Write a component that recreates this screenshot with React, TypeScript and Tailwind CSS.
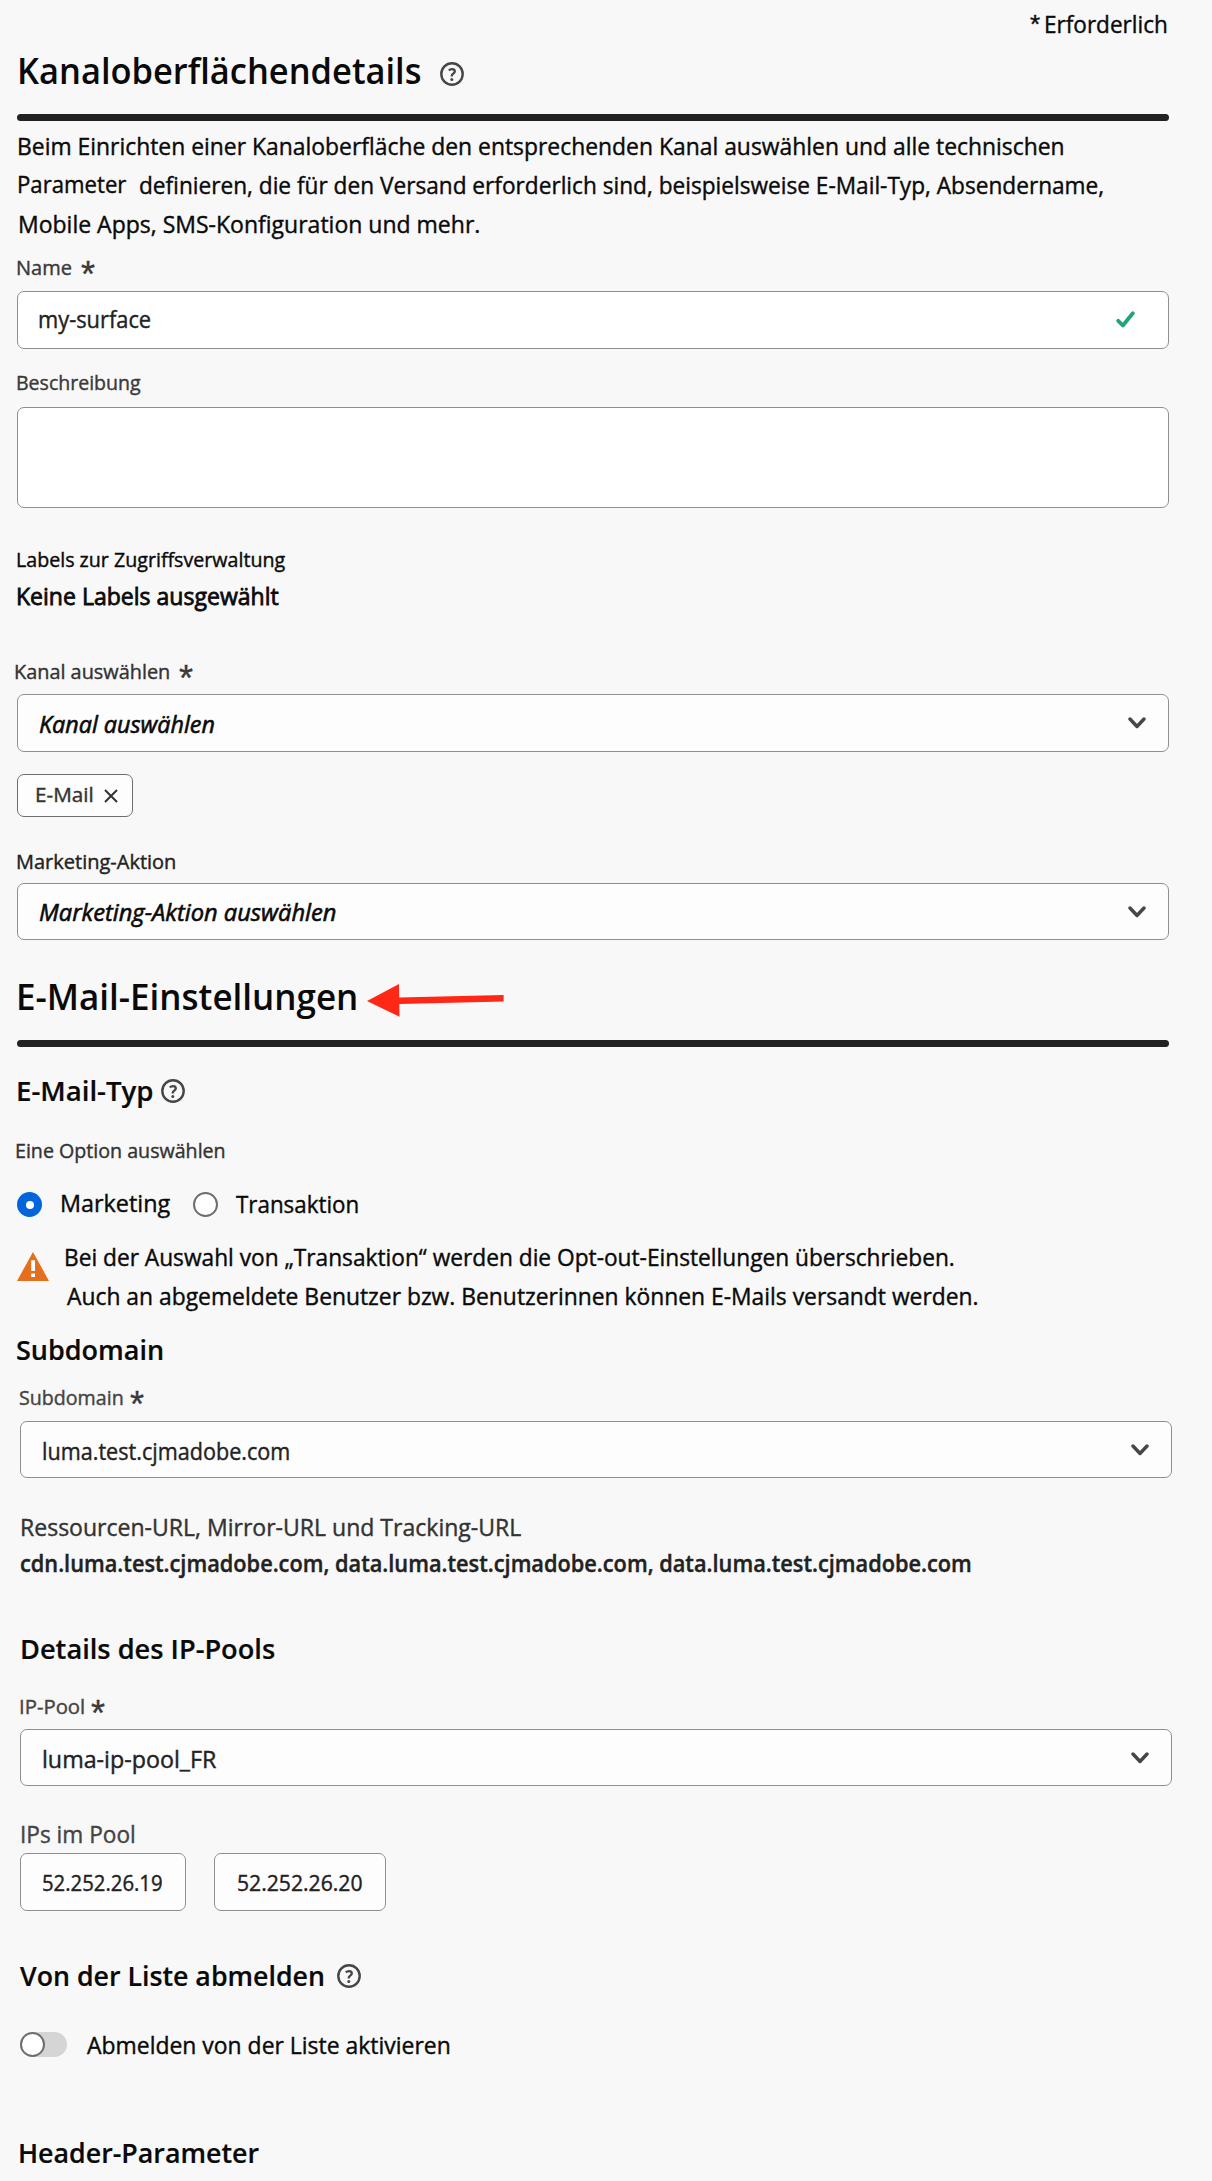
import { useLayoutEffect, useRef, useState, type ReactNode } from 'react'

/** A single line of text condensed horizontally to the given width, with a pixel of room on either side. */
function Fit({ w, className = '', children }: { w: number; className?: string; children: ReactNode }) {
  const ref = useRef<HTMLSpanElement>(null)
  const [scale, setScale] = useState(1)
  useLayoutEffect(() => {
    if (ref.current) setScale((w - 2) / ref.current.offsetWidth)
  }, [w])
  return (
    <span className={`block shrink-0 pl-px whitespace-nowrap ${className}`} style={{ width: w }}>
      <span ref={ref} className="inline-block origin-left" style={{ transform: `scaleX(${scale})` }}>
        {children}
      </span>
    </span>
  )
}

function Star({ className = '' }: { className?: string }) {
  return (
    <span className={`block h-7 shrink-0 font-['Liberation_Sans',sans-serif] text-[36px] leading-[42px] text-[#3a3a3a] ${className}`}>*</span>
  )
}

function Label({ w, className = '', required, children }: { w: number; className?: string; required?: string; children: ReactNode }) {
  return (
    <div className={`flex h-7 ${className}`}>
      <Fit w={w} className="text-[20px] leading-7">{children}</Fit>
      {required && <Star className={required} />}
    </div>
  )
}

function Help({ className = '' }: { className?: string }) {
  return (
    <svg className={`size-6 shrink-0 ${className}`} viewBox="0 0 24 24" fill="none" stroke="#464646">
      <circle cx="12" cy="12" r="10.7" strokeWidth="2.4" />
      <path d="M8.8 8.400c1-.9 2-1.300 3.100-1.300 1.700 0 2.900.9 2.900 2.300 0 2.200-3.100 2.300-3.100 4.600v.4" strokeWidth="2.300" />
      <circle cx="11.800" cy="17.500" r="1.500" fill="#464646" stroke="none" />
    </svg>
  )
}

function Chevron() {
  return (
    <svg className="h-3 w-[18px] shrink-0" viewBox="0 0 18 12" fill="none" stroke="#464646" strokeWidth="3.4" strokeLinecap="round" strokeLinejoin="round">
      <path d="M2 2 9 9.500 16 2" />
    </svg>
  )
}

function Select({ className = '', children }: { className?: string; children: ReactNode }) {
  return (
    <div className={`flex w-[1152px] items-center justify-between rounded-[7px] border border-[#8f8f8f] bg-[#fdfdfd] pr-[22px] ${className}`}>
      {children}
      <Chevron />
    </div>
  )
}

const H1 = 'text-[36px] leading-[48px] font-semibold [-webkit-text-stroke:0px]'
const H2 = 'text-[27px] leading-9 font-semibold [-webkit-text-stroke:0.2px_currentColor]'

export default function App() {
  return (
    <main className="flex h-[2181px] w-[1212px] flex-col overflow-hidden bg-[#f8f8f8] pt-2 pl-[17px] font-['Open_Sans',sans-serif] text-[24px] leading-8 text-[#0a0a0a] [-webkit-text-stroke:0.4px_currentColor]">
      <div className="flex h-8 w-[1152px] justify-end">
        <span className="mr-[3px] block h-8 font-['Liberation_Sans',sans-serif] text-[26px] leading-[33px]">*</span>
        <Fit w={126}>Erforderlich</Fit>
      </div>

      <div className="mt-[7px] flex items-center">
        <Fit w={407} className={`-ml-px ${H1}`}>Kanaloberflächendetails</Fit>
        <Help className="mt-[6px] ml-[17px]" />
      </div>
      <div className="mt-[19px] h-[7px] w-[1152px] rounded-full bg-[#222]" />

      <div className="mt-[5px] text-[24px] leading-[39px]">
        <Fit w={1050} className="-ml-px">Beim Einrichten einer Kanaloberfläche den entsprechenden Kanal auswählen und alle technischen</Fit>
        <div className="flex">
          <Fit w={111} className="-mt-px -ml-px">Parameter</Fit>
          <Fit w={967} className="ml-[11px]">definieren, die für den Versand erforderlich sind, beispielsweise E-Mail-Typ, Absendername,</Fit>
        </div>
        <Fit w={464}>Mobile Apps, SMS-Konfiguration und mehr.</Fit>
      </div>

      <Label w={58} required="ml-[8px]" className="mt-[11px] -ml-[2px] text-[#3a3a3a]">Name</Label>
      <div className="mt-[9px] flex h-[58px] w-[1152px] items-center justify-between rounded-[7px] border border-[#8f8f8f] bg-white pr-[33px] pl-[19px]">
        <Fit w={115} className="-mt-[2px] text-[23px] text-[#222]">my-surface</Fit>
        <svg className="-mt-px h-[17px] w-[19px]" viewBox="0 0 19 17" fill="none" stroke="#22a574" strokeWidth="3.800" strokeLinecap="round" strokeLinejoin="round">
          <path d="M2.200 9.800 6.900 14.500 16.800 2.200" />
        </svg>
      </div>

      <Label w={127} className="mt-5 -ml-[2px] text-[#3a3a3a]">Beschreibung</Label>
      <div className="mt-[10px] h-[101px] w-[1152px] shrink-0 rounded-[7px] border border-[#8f8f8f] bg-white" />

      <Label w={271} className="mt-[38px] -ml-[2px]">Labels zur Zugriffsverwaltung</Label>
      <Fit w={265} className="mt-[6px] -ml-[2px] [-webkit-text-stroke:0.8px_currentColor]">Keine Labels ausgewählt</Fit>

      <Label w={158} required="ml-[8px]" className="mt-[46px] -ml-1 text-[#333]">Kanal auswählen</Label>
      <Select className="mt-2 h-[58px] pl-[20px]">
        <Fit w={178} className="mt-[2px] italic [-webkit-text-stroke:0.6px_currentColor]">Kanal auswählen</Fit>
      </Select>
      <div className="mt-[22px] flex h-[43px] w-[116px] items-center rounded-[7px] border border-[#6e6e6e] bg-[#fdfdfd] pl-4">
        <Fit w={61} className="-mt-[2px] text-[20px] leading-7 text-[#333]">E-Mail</Fit>
        <svg className="ml-[9px] size-[14px]" viewBox="0 0 14 14" fill="none" stroke="#333" strokeWidth="2">
          <path d="M1 1l12 12M13 1 1 13" />
        </svg>
      </div>

      <Label w={162} className="mt-[31px] -ml-[2px] text-[#222]">Marketing-Aktion</Label>
      <Select className="mt-[7px] h-[57px] pl-[20px]">
        <Fit w={299} className="italic [-webkit-text-stroke:0.6px_currentColor]">Marketing-Aktion auswählen</Fit>
      </Select>

      <div className="mt-[33px] flex items-center">
        <Fit w={344} className={`-ml-[2px] ${H1}`}>E-Mail-Einstellungen</Fit>
        <svg className="mt-[6px] ml-2 h-[33px] w-[137px]" viewBox="0 0 137 33" fill="#ff2716">
          <path d="M0 17 32 0l.2 13.4L136.6 11v6.6L32.3 20l.2 12.8z" />
        </svg>
      </div>
      <div className="mt-[19px] h-[7px] w-[1152px] rounded-full bg-[#222]" />

      <div className="mt-[26px] flex">
        <Fit w={140} className={`-ml-[2px] ${H2}`}>E-Mail-Typ</Fit>
        <Help className="mt-[6px] ml-[6px]" />
      </div>
      <Label w={213} className="mt-7 -ml-[3px] text-[#333]">Eine Option auswählen</Label>

      <div className="mt-[22px] flex h-8">
        <span className="mt-[5px] flex size-[25px] items-center justify-center rounded-full bg-[#0265dc]">
          <span className="size-2 rounded-full bg-white" />
        </span>
        <Fit w={112} className="ml-[17px]">Marketing</Fit>
        <span className="mt-[5px] ml-[22px] size-[25px] rounded-full border-[2.500px] border-[#6e6e6e] bg-white" />
        <Fit w={125} className="mt-px ml-[17px]">Transaktion</Fit>
      </div>

      <div className="mt-[18px] flex leading-[39px]">
        <svg className="mt-[15px] h-[29px] w-8" viewBox="0 0 32 29">
          <path d="M16 0 32 29H0z" fill="#e46f1c" />
          <path d="M14.200 8.200h3.800v10.800h-3.800zM14.200 21.500h3.800v3.500h-3.800z" fill="#fff" />
        </svg>
        <div className="ml-[14px]">
          <Fit w={893}>Bei der Auswahl von „Transaktion“ werden die Opt-out-Einstellungen überschrieben.</Fit>
          <Fit w={914} className="ml-[3px]">Auch an abgemeldete Benutzer bzw. Benutzerinnen können E-Mails versandt werden.</Fit>
        </div>
      </div>

      <Fit w={150} className={`mt-[17px] -ml-[2px] ${H2}`}>Subdomain</Fit>
      <Label w={107} required="ml-[5px]" className="mt-4 ml-px text-[#444]">Subdomain</Label>
      <Select className="mt-[9px] ml-[3px] h-[57px] pl-[20px] text-[23px] text-[#222]">
        <Fit w={250} className="mt-[2px]">luma.test.cjmadobe.com</Fit>
      </Select>

      <Fit w={503} className="mt-[33px] ml-[2px] text-[#333]">Ressourcen-URL, Mirror-URL und Tracking-URL</Fit>
      <Fit w={954} className="mt-1 ml-[2px] text-[23px] font-semibold text-[#222]">cdn.luma.test.cjmadobe.com, data.luma.test.cjmadobe.com, data.luma.test.cjmadobe.com</Fit>

      <Fit w={257} className={`mt-[52px] ml-[2px] ${H2}`}>Details des IP-Pools</Fit>
      <Label w={68} required="ml-[5px]" className="mt-[26px] ml-px text-[#444]">IP-Pool</Label>
      <Select className="mt-2 ml-[3px] h-[57px] pl-[20px] text-[23px] text-[#222]">
        <Fit w={176} className="mt-[2px]">luma-ip-pool_FR</Fit>
      </Select>

      <Fit w={118} className="mt-8 ml-[2px] text-[#444]">IPs im Pool</Fit>
      <div className="mt-[3px] ml-[3px] flex gap-7 text-[22px] text-[#222]">
        <div className="flex h-[58px] w-[166px] items-center rounded-[7px] border border-[#8f8f8f] bg-[#fdfdfd] pl-[20px]">
          <Fit w={123}>52.252.26.19</Fit>
        </div>
        <div className="flex h-[58px] w-[172px] items-center rounded-[7px] border border-[#8f8f8f] bg-[#fdfdfd] pl-[21px]">
          <Fit w={128}>52.252.26.20</Fit>
        </div>
      </div>

      <div className="mt-[47px] flex">
        <Fit w={307} className={`ml-[2px] ${H2}`}>Von der Liste abmelden</Fit>
        <Help className="mt-[6px] ml-[11px]" />
      </div>
      <div className="mt-[35px] ml-[3px] flex h-8">
        <span className="mt-[3px] h-[25px] w-[47px] rounded-full bg-[#d5d5d5]">
          <span className="block size-[25px] rounded-full border-[2.500px] border-[#6e6e6e] bg-white" />
        </span>
        <Fit w={366} className="ml-[19px]">Abmelden von der Liste aktivieren</Fit>
      </div>

      <Fit w={243} className={`mt-[74px] ${H2}`}>Header-Parameter</Fit>
    </main>
  )
}
